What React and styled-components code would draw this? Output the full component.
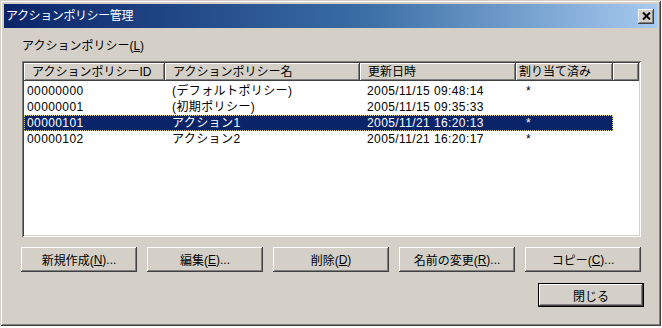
import styled, { createGlobalStyle } from "styled-components";

const GlobalStyle = createGlobalStyle`
  body {
    margin: 0;
    background: #ffffff;
    font-family: "Liberation Sans", "Noto Sans CJK JP", sans-serif;
    font-size: 12px;
  }
`;

const policies = [
  { id: "00000000", name: "(デフォルトポリシー)", date: "2005/11/15 09:48:14", used: true },
  { id: "00000001", name: "(初期ポリシー)", date: "2005/11/15 09:35:33", used: false },
  { id: "00000101", name: "アクション1", date: "2005/11/21 16:20:13", used: true, selected: true },
  { id: "00000102", name: "アクション2", date: "2005/11/21 16:20:17", used: true },
];

const buttons = [
  { label: "新規作成(", key: "N", tail: ")..." },
  { label: "編集(", key: "E", tail: ")..." },
  { label: "削除(", key: "D", tail: ")" },
  { label: "名前の変更(", key: "R", tail: ")..." },
  { label: "コピー(", key: "C", tail: ")..." },
];

const CloseIcon = () => (
  <svg width="9" height="8" viewBox="0 0 9 8">
    <path d="M1 0.5 L8 7.5 M8 0.5 L1 7.5" stroke="#000" strokeWidth="2" />
  </svg>
);

const App = () => {
  return (
    <>
      <GlobalStyle />
      <StyledWindow>
        <StyledTitleBar>
          <StyledTitle>アクションポリシー管理</StyledTitle>
          <StyledCloseButton>
            <CloseIcon />
          </StyledCloseButton>
        </StyledTitleBar>
        <StyledContent>
          <StyledLabel>
            アクションポリシー(<u>L</u>)
          </StyledLabel>
          <StyledList>
            <StyledHeader>
              <StyledHeadCell>アクションポリシーID</StyledHeadCell>
              <StyledHeadCell>アクションポリシー名</StyledHeadCell>
              <StyledHeadCell>更新日時</StyledHeadCell>
              <StyledHeadCell className="tight">割り当て済み</StyledHeadCell>
              <StyledHeadCell />
            </StyledHeader>
            {policies.map((p) => (
              <StyledRow key={p.id} $selected={p.selected}>
                <StyledCell className="first">{p.id}</StyledCell>
                <StyledCell>{p.name}</StyledCell>
                <StyledCell>{p.date}</StyledCell>
                <StyledCell className="mark">{p.used ? "*" : ""}</StyledCell>
              </StyledRow>
            ))}
          </StyledList>
          <StyledButtonRow>
            {buttons.map((b) => (
              <StyledButton key={b.key}>
                {b.label}
                <u>{b.key}</u>
                {b.tail}
              </StyledButton>
            ))}
          </StyledButtonRow>
          <StyledFooter>
            <StyledButton $default>閉じる</StyledButton>
          </StyledFooter>
        </StyledContent>
      </StyledWindow>
    </>
  );
};

// Styling
const StyledWindow = styled.div`
  width: 661px;
  height: 326px;
  box-sizing: border-box;
  padding: 4px;
  background: #d4d0c8;
  display: flex;
  flex-direction: column;
  box-shadow: inset 1px 1px #d4d0c8, inset -1px -1px #404040,
    inset 2px 2px #ffffff, inset -2px -2px #808080;
  color: #000;
`;

const StyledTitleBar = styled.div`
  height: 24px;
  display: flex;
  align-items: center;
  justify-content: space-between;
  padding: 0 3px 0 2px;
  background: linear-gradient(90deg, #0a246a 0%, #3a6ea5 55%, #a6caf0 100%);
`;

const StyledTitle = styled.span`
  color: #ffffff;
  font-size: 12px;
  letter-spacing: -0.4px;
  line-height: 14px;
`;

const StyledCloseButton = styled.div`
  width: 16px;
  height: 15px;
  display: flex;
  align-items: center;
  justify-content: center;
  background: #d4d0c8;
  box-shadow: inset -1px -1px #404040, inset 1px 1px #ffffff,
    inset -2px -2px #808080;
`;

const StyledContent = styled.div`
  flex: 1;
  display: flex;
  flex-direction: column;
  padding: 11px 16px 0 18px;
`;

const StyledLabel = styled.div`
  height: 15px;
  line-height: 15px;
  margin-bottom: 7px;
  u {
    text-underline-offset: 1px;
  }
`;

const StyledList = styled.div`
  height: 176px;
  box-sizing: border-box;
  padding: 2px;
  background: #ffffff;
  box-shadow: inset 1px 1px #808080, inset -1px -1px #ffffff,
    inset 2px 2px #404040, inset -2px -2px #d4d0c8;
`;

const StyledHeader = styled.div`
  display: grid;
  grid-template-columns: 141px 195px 156px 97px 1fr;
  height: 18px;
  margin-bottom: 2px;
  background: #d4d0c8;
`;

const StyledHeadCell = styled.div`
  box-sizing: border-box;
  padding-left: 8px;
  line-height: 18px;
  white-space: nowrap;
  overflow: hidden;
  box-shadow: inset -1px -1px #404040, inset 1px 1px #ffffff,
    inset -2px -2px #808080;
  &.tight {
    padding-left: 3px;
  }
`;

const StyledRow = styled.div`
  display: grid;
  grid-template-columns: 141px 195px 156px 97px;
  width: 589px;
  height: 16px;
  line-height: 16px;
  background: ${(p) => (p.$selected ? "#0a246a" : "transparent")};
  color: ${(p) => (p.$selected ? "#ffffff" : "#000000")};
  outline: ${(p) => (p.$selected ? "1px dotted #e0d878" : "none")};
  outline-offset: -1px;
`;

const StyledCell = styled.div`
  padding-left: 7px;
  white-space: nowrap;
  overflow: hidden;
  letter-spacing: 0.4px;
  &.first {
    padding-left: 3px;
  }
  &.mark {
    padding-left: 10px;
  }
`;

const StyledButtonRow = styled.div`
  display: flex;
  gap: 10px;
  margin-top: 10px;
  margin-left: -1px;
`;

const StyledButton = styled.div`
  width: ${(p) => (p.$default ? "106px" : "116px")};
  height: ${(p) => (p.$default ? "24px" : "25px")};
  box-sizing: border-box;
  display: flex;
  align-items: center;
  justify-content: center;
  background: #d4d0c8;
  box-shadow: ${(p) =>
    p.$default
      ? "inset 0 0 0 1px #000000, inset -2px -2px #404040, inset 2px 2px #ffffff, inset -3px -3px #808080"
      : "inset -1px -1px #404040, inset 1px 1px #ffffff, inset -2px -2px #808080"};
  u {
    text-underline-offset: 1px;
  }
`;

const StyledFooter = styled.div`
  display: flex;
  justify-content: flex-end;
  margin-top: 11px;
  margin-right: -3px;
`;

export default App;
